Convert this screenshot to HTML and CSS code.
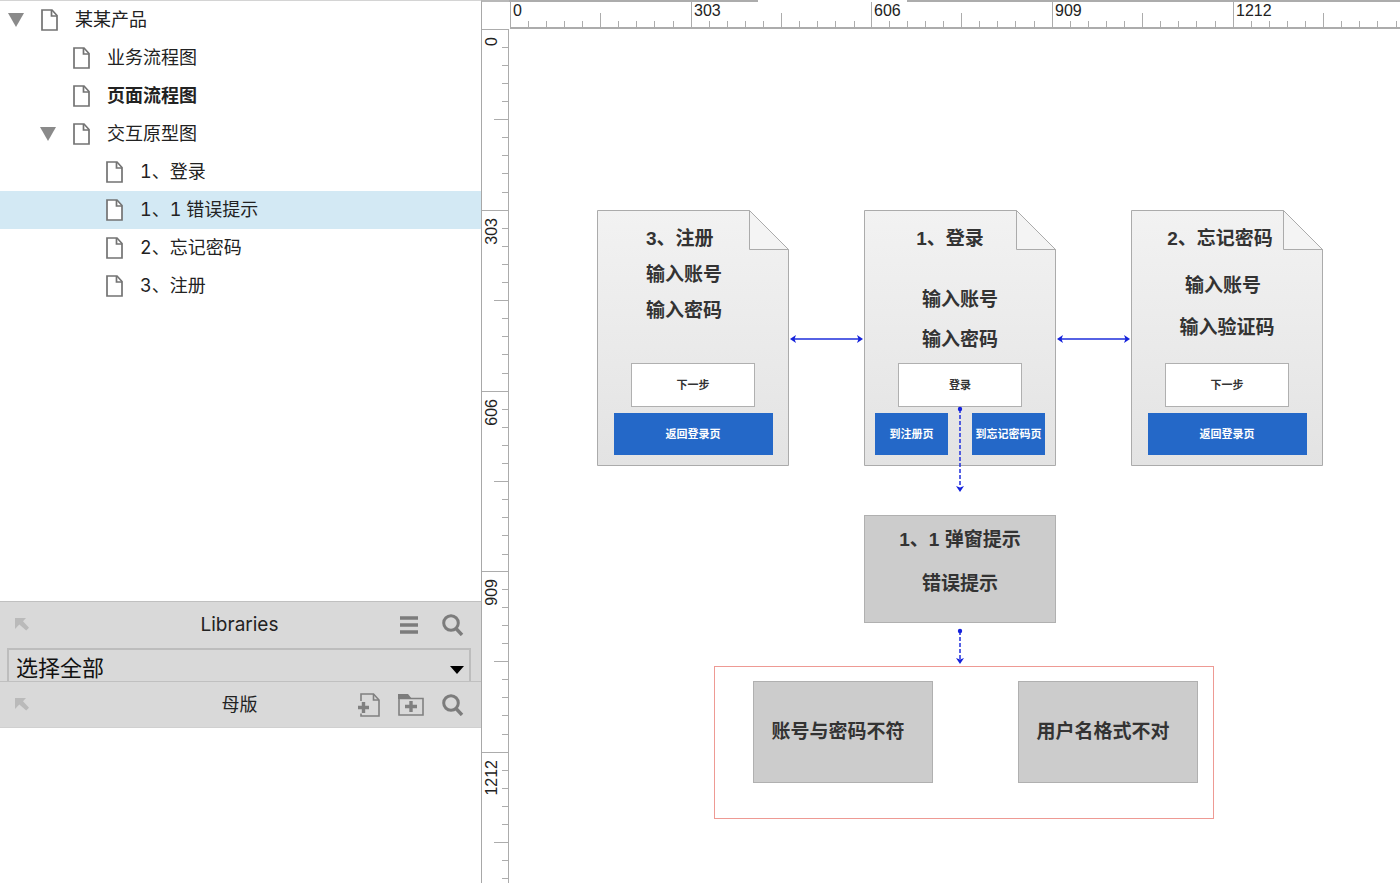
FILE: index.html
```html
<!DOCTYPE html>
<html lang="zh-CN">
<head>
<meta charset="utf-8">
<title>某某产品</title>
<link rel="stylesheet" href="styles.css">
</head>
<body>
<svg class="defs" aria-hidden="true">
  <defs>
    <symbol id="doc" viewBox="0 0 17 22">
      <path d="M1 1H11L16 6.500V21H1Z" fill="#fff" stroke="#737373" stroke-width="1.700"/>
      <path d="M10.500 1V7H16" fill="none" stroke="#737373" stroke-width="1.700"/>
    </symbol>
    <symbol id="twisty" viewBox="0 0 16 14"><path d="M0 0H16L8 14Z" fill="#8a8a8a"/></symbol>
    <symbol id="undock" viewBox="0 0 14 14">
      <path d="M0 0H11L8 3.300L14 9.800L11.200 12.600L4.300 6.600L0 11Z" fill="#bababa"/>
    </symbol>
    <symbol id="search" viewBox="0 0 22 22">
      <circle cx="9" cy="9" r="7.300" fill="none" stroke="#7c7c7c" stroke-width="3"/>
      <path d="M14 14.500L20 21" stroke="#7c7c7c" stroke-width="3.400"/>
    </symbol>
    <symbol id="page" viewBox="0 0 192 256">
      <path d="M.5 .5H152.500L191.500 39.500V255.500H.5Z" fill="url(#paper)" stroke="#ababab"/>
      <path d="M152.500 .5V39.500H191.500Z" fill="#f4f4f4" stroke="#ababab"/>
    </symbol>
    <linearGradient id="paper" x1="0" y1="0" x2="0" y2="1">
      <stop offset="0" stop-color="#f2f2f2"/><stop offset="1" stop-color="#e3e3e3"/>
    </linearGradient>
    <path id="hseg" d="M.5 2V27M90.500 13V27M18.500 21V27M36.500 21V27M54.500 21V27M72.500 21V27M108.500 21V27M126.500 21V27M144.500 21V27M163.500 21V27"/>
    <path id="vseg" d="M0 .5H26M12 90.500H26M20 18.500H26M20 36.500H26M20 54.500H26M20 72.500H26M20 108.500H26M20 126.500H26M20 144.500H26M20 163.500H26"/>
    <path id="tip" d="M0 0L-6 -4L-4.500 0L-6 4Z"/>
  </defs>
</svg>

<div class="app">
  <aside class="sidebar">
    <nav class="tree" aria-label="页面">
      <div class="row level-1">
        <button class="toggle" aria-label="折叠"><svg width="16" height="14"><use href="#twisty"/></svg></button>
        <svg class="doc"><use href="#doc"/></svg><a href="#">某某产品</a>
      </div>
      <div class="row level-2"><span class="toggle"></span><svg class="doc"><use href="#doc"/></svg><a href="#">业务流程图</a></div>
      <div class="row level-2 open"><span class="toggle"></span><svg class="doc"><use href="#doc"/></svg><a href="#">页面流程图</a></div>
      <div class="row level-2">
        <button class="toggle" aria-label="折叠"><svg width="16" height="14"><use href="#twisty"/></svg></button>
        <svg class="doc"><use href="#doc"/></svg><a href="#">交互原型图</a>
      </div>
      <div class="row level-3"><span class="toggle"></span><svg class="doc"><use href="#doc"/></svg><a href="#">1、登录</a></div>
      <div class="row level-3 selected"><span class="toggle"></span><svg class="doc"><use href="#doc"/></svg><a href="#">1、1 错误提示</a></div>
      <div class="row level-3"><span class="toggle"></span><svg class="doc"><use href="#doc"/></svg><a href="#">2、忘记密码</a></div>
      <div class="row level-3"><span class="toggle"></span><svg class="doc"><use href="#doc"/></svg><a href="#">3、注册</a></div>
    </nav>

    <section class="panel">
      <header class="panel-head">
        <button aria-label="浮动"><svg width="14" height="14"><use href="#undock"/></svg></button>
        <h2>Libraries</h2>
        <div class="tools">
          <button aria-label="菜单"><svg width="18" height="18"><path d="M0 2H18M0 9H18M0 16H18" stroke="#7c7c7c" stroke-width="3.400"/></svg></button>
          <button aria-label="搜索"><svg width="22" height="22"><use href="#search"/></svg></button>
        </div>
      </header>
      <div class="library">
        <select aria-label="元件库"><option>选择全部</option></select>
        <svg class="caret" width="14" height="8"><path d="M0 0H14L7 8Z"/></svg>
      </div>
    </section>

    <section class="panel masters">
      <header class="panel-head">
        <button aria-label="浮动"><svg width="14" height="14"><use href="#undock"/></svg></button>
        <h2>母版</h2>
        <div class="tools">
          <button aria-label="新增母版"><svg width="22" height="24" fill="none" stroke="#808080" stroke-width="1.600">
            <path d="M3 8V1H15.500L21 7V23H3V20.500"/><path d="M15.500 1V7H21"/><path d="M0 14.500H11M5.500 9V20" stroke-width="3.400"/></svg></button>
          <button aria-label="新增文件夹"><svg width="26" height="22" fill="none" stroke="#808080" stroke-width="1.600">
            <path d="M1 4.500H25V21H1Z"/><path d="M0 5V0H10L14 5Z" fill="#7c7c7c" stroke="none"/><path d="M7 12.500H19M13 7V18" stroke-width="3.400"/></svg></button>
          <button aria-label="搜索"><svg width="22" height="22"><use href="#search"/></svg></button>
        </div>
      </header>
    </section>
  </aside>

  <main class="workspace">
    <div class="corner"></div>
    <svg class="ruler ruler-x">
      <path d="M0 1H249M398 1H3000" stroke-width="2"/>
      <path d="M1 28H3000" stroke-width="2"/>
      <use href="#hseg" x="1"/><use href="#hseg" x="182"/><use href="#hseg" x="362"/><use href="#hseg" x="543"/><use href="#hseg" x="724"/>
      <text x="4" y="16">0</text><text x="185" y="16">303</text><text x="365" y="16">606</text><text x="546" y="16">909</text><text x="727" y="16">1212</text>
    </svg>
    <svg class="ruler ruler-y">
      <path d="M27 0V3000" stroke-width="2"/>
      <use href="#vseg" y="0"/><use href="#vseg" y="181"/><use href="#vseg" y="362"/><use href="#vseg" y="542"/><use href="#vseg" y="723"/>
      <g text-anchor="end">
        <text transform="translate(15 8) rotate(-90)">0</text>
        <text transform="translate(15 189) rotate(-90)">303</text>
        <text transform="translate(15 370) rotate(-90)">606</text>
        <text transform="translate(15 550) rotate(-90)">909</text>
        <text transform="translate(15 731) rotate(-90)">1212</text>
      </g>
    </svg>

    <div class="canvas">
      <article class="card register">
        <svg class="sheet"><use href="#page"/></svg>
        <h3>3、注册</h3>
        <div class="fields"><p>输入账号</p><p>输入密码</p></div>
        <div class="actions"><button class="plain">下一步</button><button class="link wide">返回登录页</button></div>
      </article>
      <article class="card login">
        <svg class="sheet"><use href="#page"/></svg>
        <h3>1、登录</h3>
        <div class="fields"><p>输入账号</p><p>输入密码</p></div>
        <div class="actions"><button class="plain">登录</button>
          <div class="pair"><button class="link">到注册页</button><button class="link">到忘记密码页</button></div></div>
      </article>
      <article class="card forgot">
        <svg class="sheet"><use href="#page"/></svg>
        <h3>2、忘记密码</h3>
        <div class="fields"><p class="account">输入账号</p><p>输入验证码</p></div>
        <div class="actions"><button class="plain">下一步</button><button class="link wide">返回登录页</button></div>
      </article>

      <article class="box popup"><h3>1、1 弹窗提示</h3><p>错误提示</p></article>
      <section class="group">
        <p class="box message">账号与密码不符</p>
        <p class="box message">用户名格式不对</p>
      </section>

      <svg class="wires">
        <g stroke="#1f2fdc" stroke-width="1.500">
          <path d="M285 310H350M552 310H617"/>
          <path d="M451 380V458M451 602V630" stroke-dasharray="4 2"/>
        </g>
        <g fill="#1421dc">
          <use href="#tip" transform="translate(354 310)"/><use href="#tip" transform="translate(281 310) rotate(180)"/>
          <use href="#tip" transform="translate(621 310)"/><use href="#tip" transform="translate(548 310) rotate(180)"/>
          <use href="#tip" transform="translate(451 463) rotate(90)"/><use href="#tip" transform="translate(451 635) rotate(90)"/>
          <circle cx="451" cy="380" r="2.200"/><circle cx="451" cy="602" r="2.200"/>
        </g>
      </svg>
    </div>
  </main>
</div>
</body>
</html>
```
FILE: styles.css
```css
* { box-sizing: border-box; }

body {
  margin: 0;
  background: #fff;
  color: #222;
  font-family: Inter, "Noto Sans CJK SC", sans-serif;
  font-size: 18px;
}

h2, h3, p { margin: 0; font-size: inherit; font-weight: inherit; }

button {
  margin: 0;
  padding: 0;
  border: 0;
  background: none;
  color: inherit;
  font: inherit;
}

svg { display: block; flex: none; }

.defs { position: absolute; width: 0; height: 0; }

.app {
  display: grid;
  grid-template-columns: 481px 1fr;
  height: 100vh;
  overflow: hidden;
}

/* Sidebar */
.sidebar { display: flex; flex-direction: column; min-height: 0; }

.tree {
  flex: none;
  height: 68.1vh;
  border-top: 1px solid #d4d4d4;
  overflow: hidden;
}

.row {
  display: flex;
  align-items: center;
  gap: 17px;
  height: 38px;
}

.row a {
  color: inherit;
  font-variant-numeric: tabular-nums;
  line-height: 38px;
  text-decoration: none;
  white-space: pre;
}

.level-1 { padding-left: 8px; }
.level-2 { padding-left: 40px; }
.level-3 { padding-left: 73px; }
.open { font-weight: 700; }
.selected { background: #d3e9f4; }
.toggle { width: 16px; }
.doc { width: 17px; height: 22px; }

.panel { flex: none; background: #d9d9d9; border-top: 1px solid #c0c0c0; }
.masters { border-bottom: 1px solid #d0d0d0; }

.panel-head {
  display: grid;
  grid-template-columns: 1fr auto 1fr;
  align-items: center;
  height: 46px;
  padding: 0 17px 0 15px;
}

.panel-head h2 { font-size: 19px; line-height: 28px; }
.masters .panel-head { height: 45px; }
.masters h2 { font-size: 18px; }

.tools { display: flex; align-items: center; justify-content: flex-end; gap: 24px; }
.masters .tools { gap: 18px; }

.library { position: relative; height: 33px; padding: 0 10px 0 7px; overflow: hidden; }

.library select {
  display: block;
  width: 100%;
  height: 40px;
  padding: 0 7px;
  border: 2px solid #bdbdbd;
  border-radius: 0;
  appearance: none;
  background: transparent;
  color: #111;
  font: inherit;
  font-size: 22px;
}

.caret { position: absolute; top: 18px; right: 17px; pointer-events: none; }

/* Workspace */
.workspace {
  display: grid;
  grid-template-columns: 28px 1fr;
  grid-template-rows: 29px 1fr;
  min-width: 0;
  min-height: 0;
}

.corner { border-top: 2px solid #b8b8b8; border-left: 1px solid #a8a8a8; }
.ruler { width: 100%; height: 100%; overflow: hidden; stroke: #acacac; }
.ruler-y { border-left: 1px solid #a8a8a8; }

.ruler text {
  fill: #222;
  stroke: none;
  font-family: "Liberation Sans", sans-serif;
  font-size: 16px;
}

.canvas {
  position: relative;
  overflow: hidden;
  color: #333;
  font-family: "Liberation Sans", "Noto Sans CJK SC", sans-serif;
  font-size: 19px;
  font-weight: 700;
}

.card {
  position: absolute;
  top: 181px;
  display: flex;
  flex-direction: column;
  width: 192px;
  height: 256px;
  padding: 11px 0 11px;
  line-height: 36px;
  text-align: center;
}

.register { left: 88px; }
.login { left: 355px; }
.forgot { left: 622px; }

.sheet { position: absolute; inset: 0; width: 100%; height: 100%; }
.card > :not(.sheet) { position: relative; }

.register h3, .register .fields { padding-left: 49px; text-align: left; }
.login h3 { padding-right: 20px; }
.login .fields { padding-top: 23px; line-height: 40px; }
.forgot h3 { padding-right: 14px; }
.forgot .fields { padding-top: 8px; line-height: 42px; }
.forgot .account { padding-right: 8px; }

.actions {
  display: flex;
  flex-direction: column;
  align-items: center;
  gap: 6px;
  margin-top: auto;
  font-size: 11px;
  line-height: 16px;
}

.pair { display: flex; gap: 24px; }
.plain { width: 124px; height: 44px; border: 1px solid #b0b0b0; background: #fff; }
.link { width: 73px; height: 42px; background: #2468c8; color: #fff; white-space: nowrap; }
.wide { width: 159px; }

.box { border: 1px solid #b0b0b0; background: #ccc; text-align: center; }

.popup {
  position: absolute;
  top: 486px;
  left: 355px;
  width: 192px;
  height: 108px;
  padding-top: 2px;
  line-height: 44px;
}

.group {
  position: absolute;
  top: 637px;
  left: 205px;
  display: flex;
  align-items: flex-start;
  gap: 85px;
  width: 500px;
  height: 153px;
  padding: 14px 15px 0 38px;
  border: 1px solid #ee9a94;
}

.message { flex: 1; padding-right: 10px; line-height: 100px; }

.wires { position: absolute; inset: 0; width: 100%; height: 100%; pointer-events: none; }
```
